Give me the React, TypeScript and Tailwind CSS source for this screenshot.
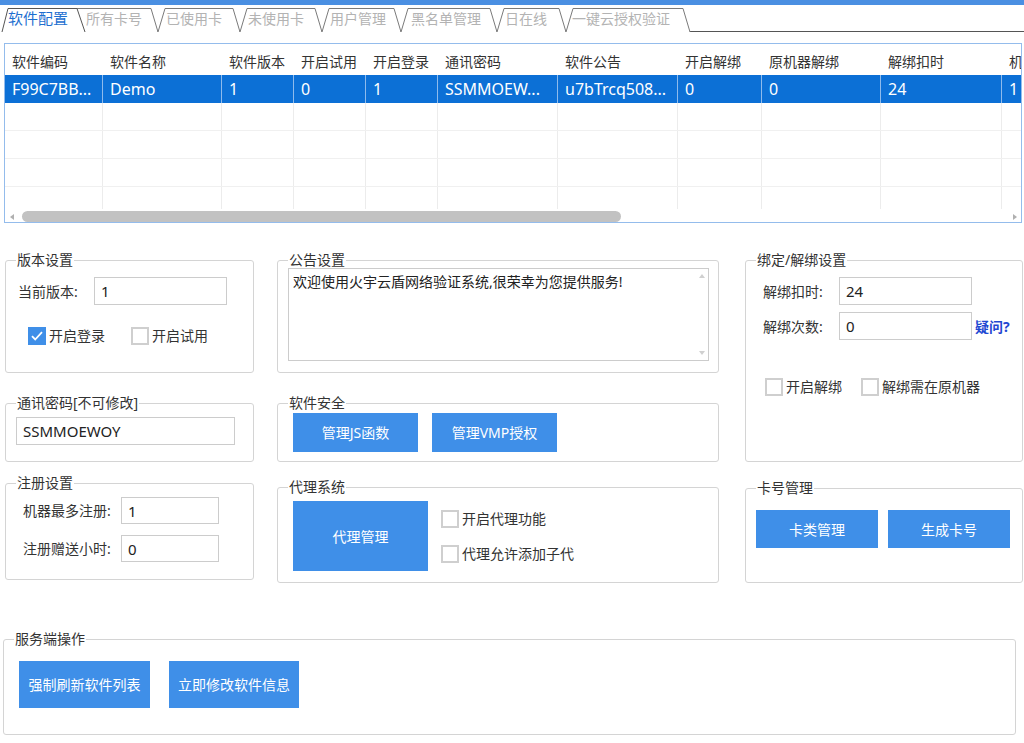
import React from 'react';

const columns = [
  { title: '软件编码', w: 98, v: 'F99C7BB...' },
  { title: '软件名称', w: 119, v: 'Demo' },
  { title: '软件版本', w: 72, v: '1' },
  { title: '开启试用', w: 72, v: '0' },
  { title: '开启登录', w: 72, v: '1' },
  { title: '通讯密码', w: 120, v: 'SSMMOEW...' },
  { title: '软件公告', w: 120, v: 'u7bTrcq508...' },
  { title: '开启解绑', w: 84, v: '0' },
  { title: '原机器解绑', w: 119, v: '0' },
  { title: '解绑扣时', w: 121, v: '24' },
  { title: '机', w: 100, v: '1' },
];

const tabs = [
  { label: '所有卡号', w: 80 },
  { label: '已使用卡', w: 82 },
  { label: '未使用卡', w: 82 },
  { label: '用户管理', w: 81 },
  { label: '黑名单管理', w: 94 },
  { label: '日在线', w: 67 },
  { label: '一键云授权验证', w: 120 },
];

// bottom x of each tab edge (left, right); the first one tucks under the active tab
const tabEdges: [number, number][] = [
  [68, 158],
  [158, 240],
  [240, 322],
  [322, 401],
  [401, 497],
  [497, 566],
  [566, 690],
];

function Group({
  title,
  className = '',
  children,
}: {
  title: string;
  className?: string;
  children?: React.ReactNode;
}) {
  return (
    <fieldset className={`border border-[#d4d4d4] rounded-[3px] min-w-0 ${className}`}>
      <legend className="ml-[10px] px-[1px] text-[14px] leading-[18px] text-[#333]">{title}</legend>
      {children}
    </fieldset>
  );
}

function Check({ checked = false, label, className = '' }: { checked?: boolean; label: string; className?: string }) {
  return (
    <div className={`flex items-center ${className}`}>
      {checked ? (
        <span className="w-[18px] h-[18px] bg-[#3f8fe8] flex items-center justify-center">
          <svg width="14" height="14" viewBox="0 0 14 14">
            <path d="M2 7.2l3.2 3.3L12 3.2" stroke="white" strokeWidth="1.8" fill="none" />
          </svg>
        </span>
      ) : (
        <span className="w-[18px] h-[18px] border-2 border-[#cfcfcf] bg-white" />
      )}
      <span className="ml-[3px] text-[14px] leading-[18px] text-[#333]">{label}</span>
    </div>
  );
}

function Field({ value, className = '' }: { value: string; className?: string }) {
  return (
    <input
      readOnly
      value={value}
      className={`border border-[#cccccc] bg-white px-[6px] text-[15px] text-[#222] outline-none ${className}`}
    />
  );
}

function Btn({ label, className = '' }: { label: string; className?: string }) {
  return (
    <button className={`bg-[#3f8fe8] text-white text-[14px] flex items-center justify-center ${className}`}>
      {label}
    </button>
  );
}

function TabStrip() {
  return (
    <div className="relative h-[27px]">
      <svg className="absolute inset-0" width="1024" height="27" viewBox="0 0 1024 27">
        <line x1="80" y1="26.5" x2="1024" y2="26.5" stroke="#555" strokeWidth="1" />
        {tabEdges.map(([l, r], i) => (
          <polyline
            key={i}
            points={`${l},27 ${l + 7},3.5 ${r - 7},3.5 ${r},27`}
            fill="white"
            stroke="#7a7a7a"
            strokeWidth="1"
          />
        ))}
        <polygon points="2,27.5 8,3.5 77,3.5 85,27.5" fill="white" stroke="none" />
        <polyline points="2,27 8,3.5 77,3.5 85,27" fill="none" stroke="#555" strokeWidth="1" />
      </svg>
      <div className="relative flex items-center h-[27px] pl-[8px]">
        <span className="w-[78px] text-[15px] text-[#1e6fd0]">软件配置</span>
        {tabs.map((t) => (
          <span key={t.label} style={{ width: t.w }} className="text-[14px] text-[#b3b3b3] shrink-0">
            {t.label}
          </span>
        ))}
      </div>
    </div>
  );
}

function SoftTable() {
  return (
    <div className="ml-[4px] mt-[11px] w-[1018px] h-[180px] border border-[#94bcec] overflow-hidden bg-white">
      <div className="flex h-[31px] items-center">
        {columns.map((c) => (
          <div key={c.title} style={{ width: c.w }} className="shrink-0 pl-[7px] pt-[3px] text-[14px] text-[#333] whitespace-nowrap">
            {c.title}
          </div>
        ))}
      </div>
      <div className="h-[134px] overflow-hidden">
        <div className="flex h-[28px] bg-[#0c70d6]">
          {columns.map((c) => (
            <div
              key={c.title}
              style={{ width: c.w }}
              className="shrink-0 pl-[7px] text-[16px] leading-[28px] text-white border-r border-[#8fbbec] whitespace-nowrap"
            >
              {c.v}
            </div>
          ))}
        </div>
        {[0, 1, 2, 3].map((r) => (
          <div key={r} className="flex h-[28px] border-b border-[#f0f0f0]">
            {columns.map((c) => (
              <div key={c.title} style={{ width: c.w }} className="shrink-0 border-r border-[#ececec]" />
            ))}
          </div>
        ))}
      </div>
      <div className="flex items-center h-[13px] mt-[1px]">
        <span className="ml-[5px] w-0 h-0 border-y-[3px] border-y-transparent border-r-[4px] border-r-[#b0b0b0]" />
        <span className="ml-[8px] w-[599px] h-[11px] rounded-full bg-[#c2c2c2]" />
        <span className="ml-auto mr-[4px] w-0 h-0 border-y-[3px] border-y-transparent border-l-[4px] border-l-[#b0b0b0]" />
      </div>
    </div>
  );
}

export default function App() {
  return (
    <div className="w-[1024px] h-[743px] overflow-hidden bg-white font-['Noto_Sans','Noto_Sans_CJK_SC',sans-serif] text-[#333]">
      <div className="h-[5px] bg-[#4a8fe2]" />
      <TabStrip />
      <SoftTable />

      <div className="flex mt-[28px] ml-[5px]">
        {/* left column */}
        <div className="w-[249px] flex flex-col">
          <Group title="版本设置" className="h-[122px]">
            <div className="flex items-center mt-[8px]">
              <span className="ml-[12px] w-[76px] text-[14px]">当前版本:</span>
              <Field value="1" className="w-[133px] h-[28px]" />
            </div>
            <div className="flex mt-[22px]">
              <Check checked label="开启登录" className="ml-[22px] w-[103px]" />
              <Check label="开启试用" />
            </div>
          </Group>
          <Group title="通讯密码[不可修改]" className="h-[68px] mt-[21px]">
            <Field value="SSMMOEWOY" className="ml-[10px] mt-[5px] w-[219px] h-[28px]" />
          </Group>
          <Group title="注册设置" className="h-[106px] mt-[12px]">
            <div className="flex items-center mt-[5px]">
              <span className="ml-[17px] w-[98px] text-[14px]">机器最多注册:</span>
              <Field value="1" className="w-[98px] h-[27px]" />
            </div>
            <div className="flex items-center mt-[11px]">
              <span className="ml-[17px] w-[98px] text-[14px]">注册赠送小时:</span>
              <Field value="0" className="w-[98px] h-[27px]" />
            </div>
          </Group>
        </div>

        {/* middle column */}
        <div className="w-[442px] ml-[23px] flex flex-col">
          <Group title="公告设置" className="h-[122px]">
            <div className="ml-[10px] -mt-[1px] w-[421px] h-[93px] border border-[#cccccc] flex">
              <p className="flex-1 pl-[4px] pt-[2px] text-[14px] leading-[22px] text-[#222]">
                欢迎使用火宇云盾网络验证系统,很荣幸为您提供服务!
              </p>
              <div className="w-[12px] flex flex-col justify-between items-center py-[5px]">
                <span className="w-0 h-0 border-x-[3px] border-x-transparent border-b-[4px] border-b-[#d0d0d0]" />
                <span className="w-0 h-0 border-x-[3px] border-x-transparent border-t-[4px] border-t-[#d0d0d0]" />
              </div>
            </div>
          </Group>
          <Group title="软件安全" className="h-[68px] mt-[21px]">
            <div className="flex mt-[1px] ml-[15px] gap-[14px]">
              <Btn label="管理JS函数" className="w-[125px] h-[39px]" />
              <Btn label="管理VMP授权" className="w-[125px] h-[39px]" />
            </div>
          </Group>
          <Group title="代理系统" className="h-[105px] mt-[16px]">
            <div className="flex mt-[5px] ml-[15px]">
              <Btn label="代理管理" className="w-[135px] h-[70px]" />
              <div className="ml-[13px] pt-[9px] flex flex-col gap-[17px]">
                <Check label="开启代理功能" />
                <Check label="代理允许添加子代" />
              </div>
            </div>
          </Group>
        </div>

        {/* right column */}
        <div className="w-[278px] ml-[26px] flex flex-col">
          <Group title="绑定/解绑设置" className="h-[211px]">
            <div className="flex items-center mt-[8px]">
              <span className="ml-[17px] w-[76px] text-[14px]">解绑扣时:</span>
              <Field value="24" className="w-[133px] h-[28px]" />
            </div>
            <div className="flex items-center mt-[7px]">
              <span className="ml-[17px] w-[76px] text-[14px]">解绑次数:</span>
              <Field value="0" className="w-[133px] h-[28px]" />
              <span className="ml-[3px] text-[14px] font-bold text-[#1f48d2]">疑问?</span>
            </div>
            <div className="flex mt-[38px]">
              <Check label="开启解绑" className="ml-[19px] w-[96px]" />
              <Check label="解绑需在原机器" />
            </div>
          </Group>
          <Group title="卡号管理" className="h-[104px] mt-[17px]">
            <div className="flex mt-[13px] ml-[10px] gap-[10px]">
              <Btn label="卡类管理" className="w-[122px] h-[38px]" />
              <Btn label="生成卡号" className="w-[122px] h-[38px]" />
            </div>
          </Group>
        </div>
      </div>

      <Group title="服务端操作" className="ml-[3px] mt-[47px] w-[1013px] h-[105px]">
        <div className="flex mt-[13px] ml-[15px] gap-[19px]">
          <Btn label="强制刷新软件列表" className="w-[131px] h-[47px]" />
          <Btn label="立即修改软件信息" className="w-[130px] h-[47px]" />
        </div>
      </Group>
    </div>
  );
}
